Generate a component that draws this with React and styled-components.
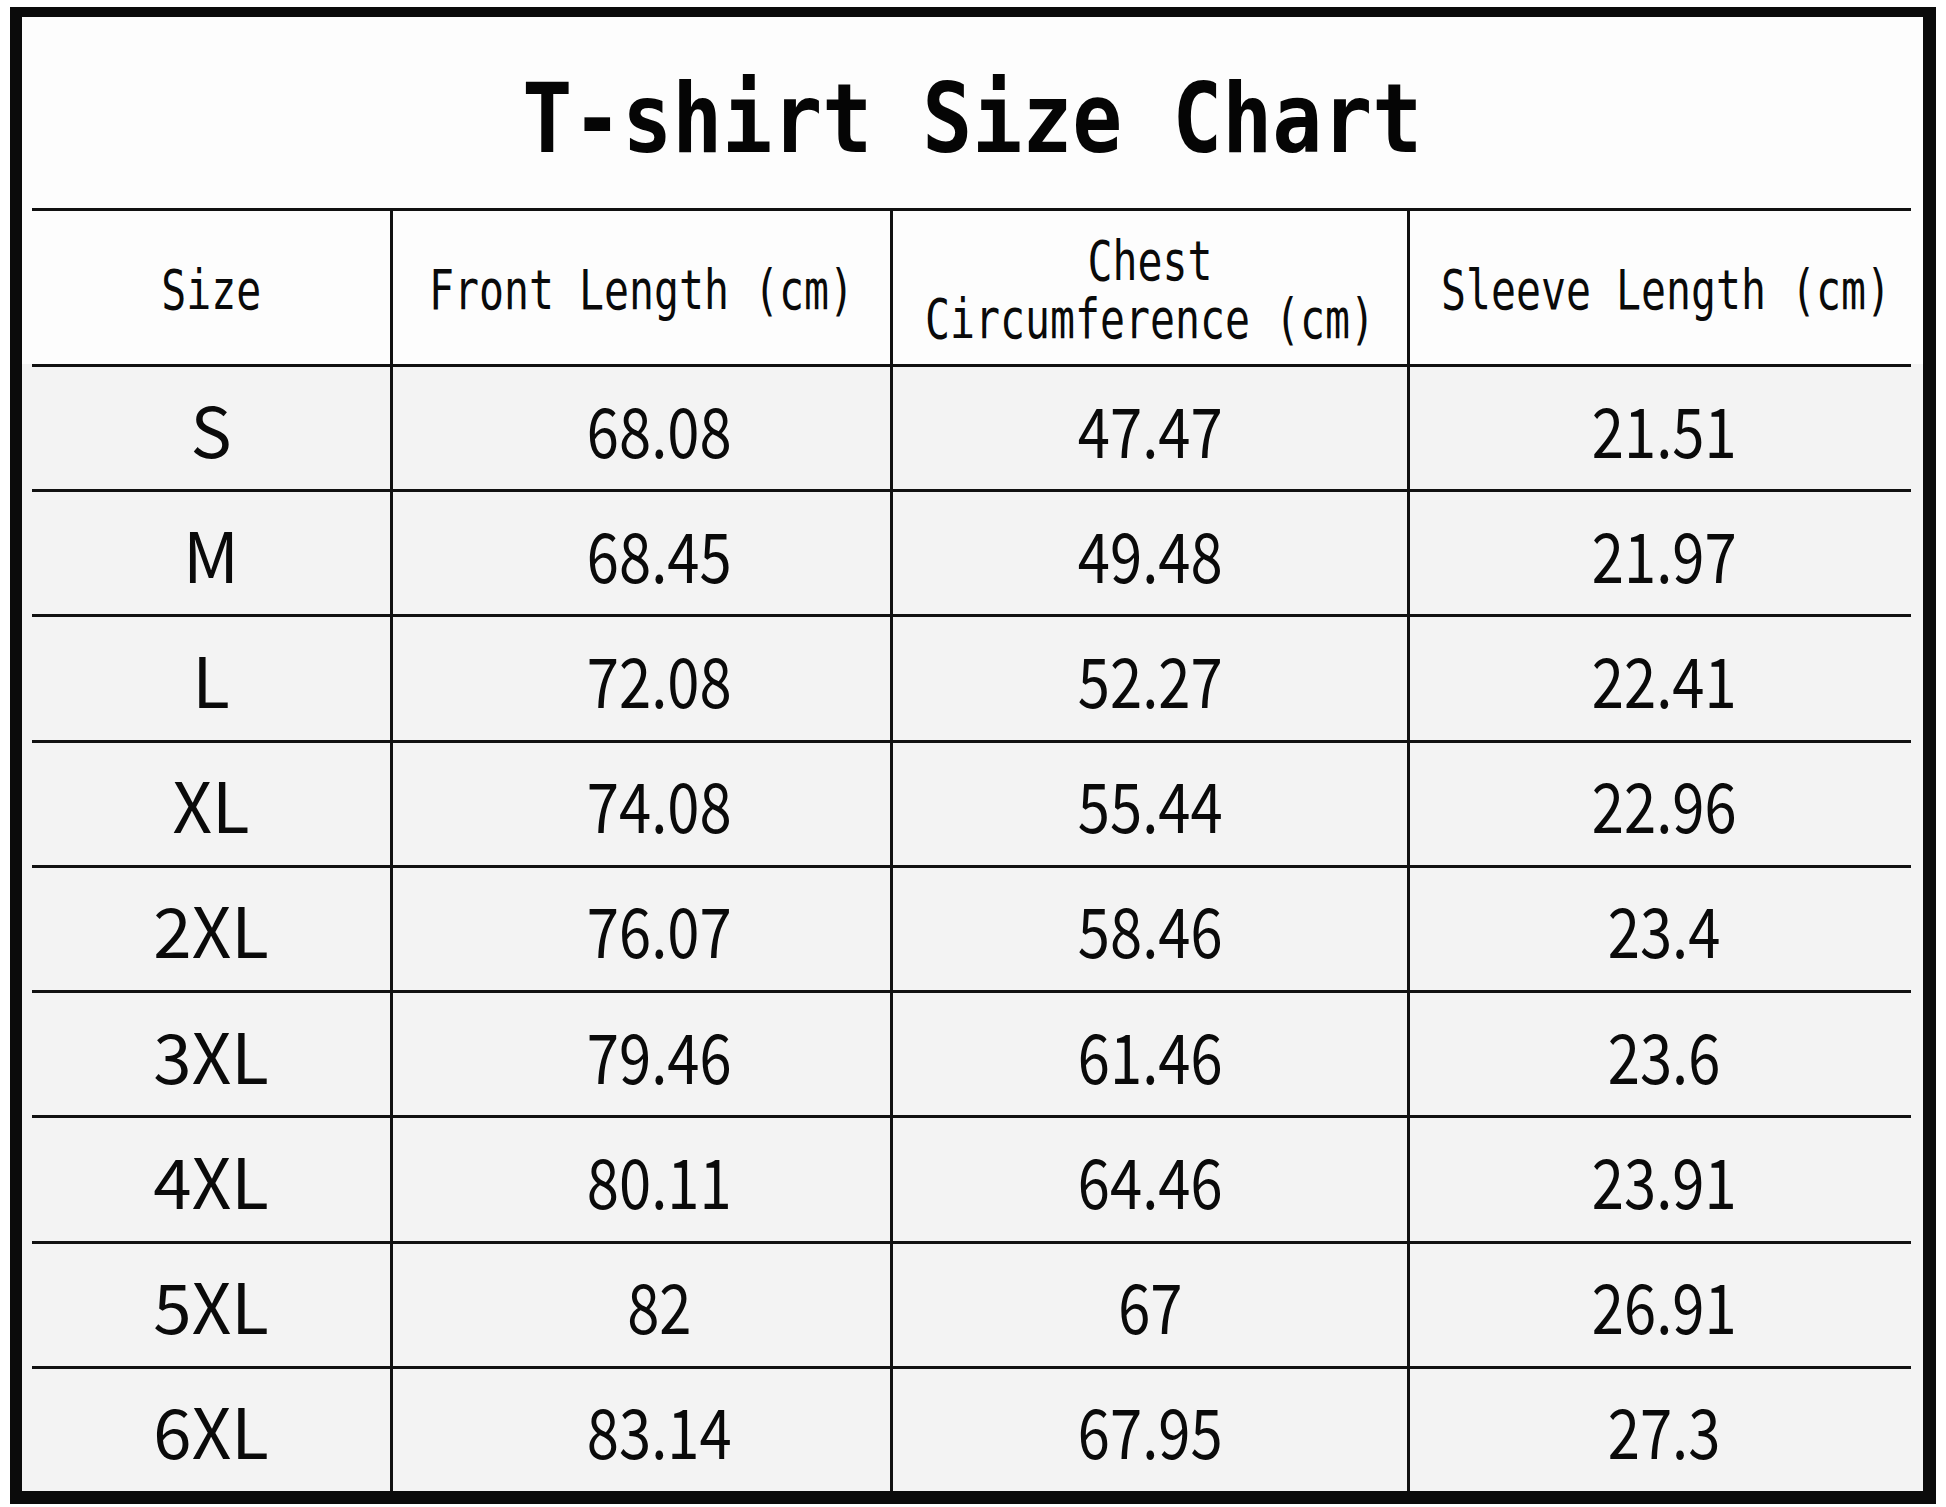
import styled, { createGlobalStyle } from "styled-components";

const GlobalStyle = createGlobalStyle`
  html, body {
    margin: 0;
    background: #ffffff;
  }
  #root {
    padding: 7px 10px 3px;
  }
`;

const headers = ["Size", "Front Length (cm)", "Chest\nCircumference (cm)", "Sleeve Length (cm)"];

// extra left padding per column, the chart isn't perfectly centred
const headShift = [0, 0, 0, 12];
const valueShift = [0, 36, 0, 8];

const sizes = [
  ["S", "68.08", "47.47", "21.51"],
  ["M", "68.45", "49.48", "21.97"],
  ["L", "72.08", "52.27", "22.41"],
  ["XL", "74.08", "55.44", "22.96"],
  ["2XL", "76.07", "58.46", "23.4"],
  ["3XL", "79.46", "61.46", "23.6"],
  ["4XL", "80.11", "64.46", "23.91"],
  ["5XL", "82", "67", "26.91"],
  ["6XL", "83.14", "67.95", "27.3"],
];

const App = () => {
  return (
    <>
      <GlobalStyle />
      <Frame>
        <TitleBar>
          <Title>T-shirt Size Chart</Title>
        </TitleBar>
        <Band $head>
          <Row>
            {headers.map((h, i) => (
              <Cell key={h} $first={i === 0} $shift={headShift[i]} $head>
                <HeadText>{h}</HeadText>
              </Cell>
            ))}
          </Row>
        </Band>
        <Band>
          {sizes.map((row) => (
            <Row key={row[0]}>
              {row.map((v, i) => (
                <Cell key={i} $first={i === 0} $shift={valueShift[i]}>
                  <Value $number={i > 0}>{v}</Value>
                </Cell>
              ))}
            </Row>
          ))}
        </Band>
      </Frame>
    </>
  );
};

const Frame = styled.div`
  box-sizing: border-box;
  width: 1926px;
  height: 1497px;
  border-style: solid;
  border-color: #0b0b0b;
  border-width: 10px 13px 13px 12px;
  display: flex;
  flex-direction: column;
  background: #f3f3f3;
`;

const TitleBar = styled.div`
  box-sizing: border-box;
  flex: none;
  height: 191px;
  padding-top: 12px;
  background: #fdfdfd;
  display: flex;
  align-items: center;
  justify-content: center;
`;

const Title = styled.h1`
  margin: 0;
  font-family: "DejaVu Sans Mono", monospace;
  font-weight: bold;
  font-size: 96px;
  line-height: 1;
  color: #050505;
  white-space: nowrap;
  transform: scaleX(0.865);
`;

const Band = styled.div`
  box-sizing: border-box;
  padding: 0 12px 0 10px;
  background: ${(p) => (p.$head ? "#fdfdfd" : "#f3f3f3")};
  display: flex;
  flex-direction: column;
  flex: ${(p) => (p.$head ? "none" : "1")};
  height: ${(p) => (p.$head ? "156px" : "auto")};
`;

const Row = styled.div`
  box-sizing: border-box;
  flex: 1;
  display: grid;
  grid-template-columns: 358px 500px 517px minmax(0, 1fr);
  border-top: 3px solid #111;
`;

const Cell = styled.div`
  box-sizing: border-box;
  min-width: 0;
  display: flex;
  align-items: center;
  justify-content: center;
  border-left: ${(p) => (p.$first ? "none" : "3px solid #111")};
  padding-left: ${(p) => p.$shift}px;
  padding-top: ${(p) => (p.$head ? "4px" : "0")};
`;

const HeadText = styled.span`
  display: inline-block;
  font-family: "DejaVu Sans Mono", monospace;
  font-size: 55px;
  line-height: 58px;
  color: #0a0a0a;
  white-space: pre;
  text-align: center;
  transform: scaleX(0.755);
`;

const Value = styled.span`
  display: inline-block;
  font-family: "Noto Sans CJK SC", "Open Sans", sans-serif;
  font-size: 69px;
  line-height: 1;
  color: #0a0a0a;
  white-space: nowrap;
  transform: ${(p) => (p.$number ? "scaleX(0.84)" : "none")};
`;

export default App;
